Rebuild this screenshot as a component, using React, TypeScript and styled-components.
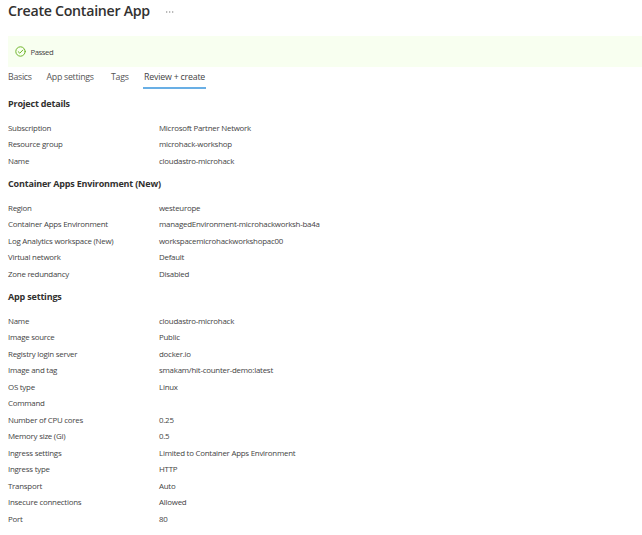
import React from 'react';
import styled, { createGlobalStyle } from 'styled-components';

const GlobalStyle = createGlobalStyle`
  * { box-sizing: border-box; }
  body { margin: 0; background: #fff; color: #323130; font-family: "Open Sans", "Noto Sans", sans-serif; }
`;

const Page = styled.main`
  width: 100%;
  height: 535px;
  overflow: hidden;
  padding-left: 8px;
`;

const Header = styled.header`
  height: 36px;
  display: flex;
  align-items: flex-start;
  gap: 16px;
`;

const Title = styled.h1`
  margin: 0;
  width: 142px;
  white-space: nowrap;
  font-size: 14.2px;
  line-height: 22px;
  font-weight: 600;
  letter-spacing: -0.28px;
  color: #323130;
`;

const More = styled.svg`
  width: 8px;
  height: 2px;
  margin-top: 11px;
  fill: #777;
`;

const Banner = styled.div`
  height: 31px;
  padding-left: 7px;
  display: flex;
  align-items: center;
  gap: 4.5px;
  background: #f8fff0;
  font-size: 7.7px;
  letter-spacing: -0.42px;
  color: #444;
`;

const PassedIcon = styled.svg`
  width: 11px;
  height: 11px;
  fill: none;
  stroke: #70b52c;
  stroke-linecap: round;
  stroke-linejoin: round;
`;

const Tabs = styled.nav`
  display: flex;
  height: 22px;
`;

const Tab = styled.a<{ $width: number; $active?: boolean }>`
  width: ${(p) => p.$width}px;
  height: 22px;
  white-space: nowrap;
  font-size: 8.8px;
  line-height: 21px;
  letter-spacing: -0.28px;
  color: #555;
  border-bottom: 2px solid ${(p) => (p.$active ? '#69afe5' : 'transparent')};
  ${(p) => p.$active && 'padding-left: 1px; color: #444; letter-spacing: -0.2px;'}
`;

const Details = styled.div`
  padding-top: 0.25px;
`;

const Section = styled.section`
  padding-top: 6.5px;
`;

const Heading = styled.h2`
  margin: 0 0 7.5px;
  height: 16.5px;
  line-height: 16.5px;
  font-size: 9px;
  font-weight: 700;
  letter-spacing: -0.18px;
  white-space: nowrap;
`;

const Rows = styled.dl`
  margin: 0;
`;

const Row = styled.div`
  display: grid;
  grid-template-columns: 151px 1fr;
  height: 16.5px;
  line-height: 16.5px;
  font-size: 7.9px;
  letter-spacing: -0.24px;
  white-space: nowrap;
  color: #444;
`;

const Label = styled.dt``;
const Value = styled.dd`
  margin: 0;
`;

const sections: { title: string; rows: [string, string][] }[] = [
  {
    title: 'Project details',
    rows: [
      ['Subscription', 'Microsoft Partner Network'],
      ['Resource group', 'microhack-workshop'],
      ['Name', 'cloudastro-microhack'],
    ],
  },
  {
    title: 'Container Apps Environment (New)',
    rows: [
      ['Region', 'westeurope'],
      ['Container Apps Environment', 'managedEnvironment-microhackworksh-ba4a'],
      ['Log Analytics workspace (New)', 'workspacemicrohackworkshopac00'],
      ['Virtual network', 'Default'],
      ['Zone redundancy', 'Disabled'],
    ],
  },
  {
    title: 'App settings',
    rows: [
      ['Name', 'cloudastro-microhack'],
      ['Image source', 'Public'],
      ['Registry login server', 'docker.io'],
      ['Image and tag', 'smakam/hit-counter-demo:latest'],
      ['OS type', 'Linux'],
      ['Command', ''],
      ['Number of CPU cores', '0.25'],
      ['Memory size (Gi)', '0.5'],
      ['Ingress settings', 'Limited to Container Apps Environment'],
      ['Ingress type', 'HTTP'],
      ['Transport', 'Auto'],
      ['Insecure connections', 'Allowed'],
      ['Port', '80'],
    ],
  },
];

export default function App() {
  return (
    <Page>
      <GlobalStyle />
      <Header>
        <Title>Create Container App</Title>
        <More viewBox="0 0 8 2" aria-label="More">
          <rect x="0" y="0.5" width="1.3" height="1" />
          <rect x="3" y="0.5" width="1.3" height="1" />
          <rect x="6" y="0.5" width="1.3" height="1" />
        </More>
      </Header>
      <Banner>
        <PassedIcon viewBox="0 0 11 11" aria-hidden="true">
          <circle cx="5.5" cy="5.5" r="4.7" />
          <path d="M3.2 5.7 4.8 7.2 7.9 4" />
        </PassedIcon>
        <span>Passed</span>
      </Banner>
      <Tabs>
        <Tab $width={38.5}>Basics</Tab>
        <Tab $width={64.5}>App settings</Tab>
        <Tab $width={32}>Tags</Tab>
        <Tab $width={63} $active>Review + create</Tab>
      </Tabs>
      <Details>
        {sections.map((section) => (
          <Section key={section.title}>
            <Heading>{section.title}</Heading>
            <Rows>
              {section.rows.map(([label, value]) => (
                <Row key={label}>
                  <Label>{label}</Label>
                  <Value>{value}</Value>
                </Row>
              ))}
            </Rows>
          </Section>
        ))}
      </Details>
    </Page>
  );
}
